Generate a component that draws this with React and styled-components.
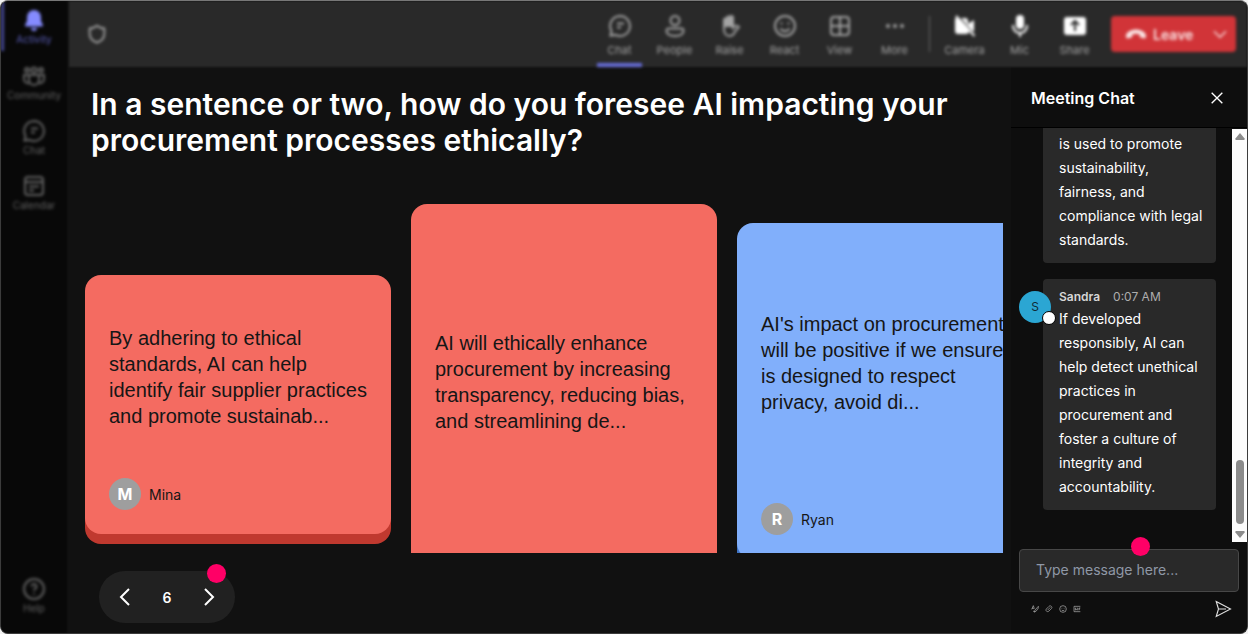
import styled, { createGlobalStyle } from "styled-components";

const GlobalStyle = createGlobalStyle`
  * {
    box-sizing: border-box;
  }

  body {
    margin: 0;
    background: #f2f2f2;
    font-family: Inter, "Liberation Sans", sans-serif;
    color: #fff;
  }

  button {
    border: none;
    padding: 0;
    background: none;
    color: inherit;
    font-family: inherit;
    cursor: pointer;
  }
`;

const Frame = styled.div`
  display: flex;
  height: 100vh;
  border: 1px solid #3c3c3c;
  border-top-color: #777;
  border-radius: 8px;
  overflow: hidden;
  background: #111;
`;

const Sidebar = styled.nav`
  width: 66px;
  flex: none;
  display: flex;
  flex-direction: column;
  gap: 9px;
  padding-bottom: 14px;
  background: #080808;
  filter: blur(1px);
`;

const SideLink = styled.a`
  display: flex;
  flex-direction: column;
  align-items: center;
  justify-content: center;
  height: 46px;
  margin-top: ${(props) => (props.$last ? "auto" : "0")};
  font-size: 10px;
  line-height: 14px;
  text-decoration: none;
  color: #646464;
  filter: blur(1px);
`;

const ActiveLink = styled(SideLink)`
  height: 50px;
  padding: 2px 3px 0 0;
  border-left: 3px solid #484b98;
  color: #5a5eb8;

  svg {
    color: #858bff;
  }
`;

const Body = styled.div`
  flex: 1;
  min-width: 0;
  display: flex;
  flex-direction: column;
`;

const Toolbar = styled.header`
  display: flex;
  align-items: center;
  gap: 10px;
  flex: none;
  height: 66px;
  margin-left: 2px;
  padding: 0 11px 0 17px;
  background: #292929;
  color: #a4a4a4;
  filter: blur(1px);

  & > * {
    filter: blur(1px);
  }
`;

const Shield = styled.span`
  display: flex;
  margin-right: auto;
`;

const Tool = styled.button`
  width: 45px;
  height: 66px;
  display: flex;
  flex-direction: column;
  align-items: center;
  gap: 4px;
  padding-top: 13px;
  border-bottom: 4px solid ${(props) => (props.$active ? "#686dda" : "transparent")};
  font-size: 11px;
  line-height: 16px;

  svg {
    color: ${(props) => (props.$bright ? "#fff" : "inherit")};
  }
`;

const Divider = styled.span`
  width: 1px;
  height: 36px;
  margin: 0 2px;
  background: #6a6a6a;
`;

const Leave = styled.button`
  display: flex;
  align-items: center;
  gap: 6px;
  height: 36px;
  width: 125px;
  margin-left: 4px;
  padding: 0 8px 0 14px;
  border-radius: 4px;
  background: #d13438;
  color: #fbe6e6;
  font-size: 14px;
  font-weight: 600;

  svg:last-child {
    margin-left: auto;
  }
`;

const Content = styled.div`
  flex: 1;
  min-height: 0;
  display: flex;
`;

const Board = styled.main`
  flex: 1;
  min-width: 0;
  display: flex;
  flex-direction: column;
  padding: 19px 8px 10px 18px;
`;

const Question = styled.h1`
  margin: 0 40px 0 6px;
  font-size: 30px;
  line-height: 36px;
  font-weight: 600;
`;

const CardRow = styled.div`
  flex: 1;
  min-height: 0;
  display: flex;
  align-items: flex-start;
  gap: 20px;
  padding-top: 45px;
  overflow: hidden;
`;

const CardBox = styled.article`
  flex: none;
  width: 306px;
  height: ${(props) => props.$height}px;
  margin-top: ${(props) => props.$top}px;
  display: flex;
  flex-direction: column;
  gap: 24px;
  padding: 24px;
  border-radius: 16px;
  background: ${(props) => props.$color};
  box-shadow: 0 10px 0 ${(props) => props.$edge};
  color: #161616;
`;

const Answer = styled.p`
  flex: 1;
  display: flex;
  align-items: center;
  margin: 0;
  font-family: "Liberation Sans", Arial, sans-serif;
  font-size: 20px;
  line-height: 26px;
`;

const Author = styled.div`
  display: flex;
  align-items: center;
  gap: 8px;
  min-height: 32px;
  font-size: 14px;
`;

const Initial = styled.span`
  width: 32px;
  height: 32px;
  border-radius: 50%;
  background: #9e9e9e;
  color: #fff;
  font-size: 16px;
  line-height: 32px;
  font-weight: 700;
  text-align: center;
`;

const Pager = styled.div`
  position: relative;
  align-self: flex-start;
  display: flex;
  align-items: center;
  justify-content: space-between;
  flex: none;
  width: 136px;
  height: 52px;
  margin: 18px 0 0 14px;
  padding: 0 14px;
  border-radius: 26px;
  background: #212121;
  font-size: 14px;
  font-weight: 600;

  button {
    display: flex;
  }
`;

const Dot = styled.span`
  position: absolute;
  top: ${(props) => props.$top}px;
  right: ${(props) => props.$right}px;
  width: 19px;
  height: 19px;
  border-radius: 50%;
  background: #ff0066;
`;

const ChatPanel = styled.aside`
  width: 236px;
  flex: none;
  display: flex;
  flex-direction: column;
  background: #0e0e0e;
`;

const ChatHeader = styled.div`
  display: flex;
  align-items: center;
  justify-content: space-between;
  height: 61px;
  flex: none;
  padding: 2px 22px 0 20px;
  border-bottom: 1px solid #000;

  button {
    display: flex;
  }
`;

const ChatTitle = styled.h2`
  margin: 0;
  font-size: 16px;
  font-weight: 600;
`;

const ChatScroll = styled.div`
  flex: 1;
  min-height: 0;
  display: flex;
`;

const Messages = styled.div`
  flex: 1;
  min-width: 0;
  display: flex;
  flex-direction: column;
  justify-content: flex-end;
  gap: 16px;
  padding: 0 16px 32px 32px;
  overflow: hidden;
`;

const Bubble = styled.div`
  position: relative;
  flex: none;
  padding: 8px 12px 11px 16px;
  border-radius: 4px;
  background: #292929;
  font-size: 14px;
  line-height: 24px;

  p {
    margin: 0;
  }
`;

const Meta = styled.div`
  display: flex;
  gap: 13px;
  font-size: 12px;
  line-height: 20px;
  color: #adadad;

  strong {
    font-weight: 600;
    color: #d6d6d6;
  }
`;

const Avatar = styled.span`
  position: absolute;
  top: 12px;
  left: -24px;
  width: 32px;
  height: 32px;
  border-radius: 50%;
  background: #2ba6d3;
  color: #102a35;
  font-size: 12px;
  line-height: 31px;
  text-align: center;

  &::after {
    content: "";
    position: absolute;
    right: -4px;
    bottom: 0;
    width: 12px;
    height: 12px;
    margin: 0 -1px -2px 0;
    border: 1px solid #000;
    border-radius: 50%;
    background: #fff;
  }
`;

const Scrollbar = styled.div`
  width: 15px;
  margin-top: 1px;
  display: flex;
  flex-direction: column;
  align-items: center;
  padding: 4px 0;
  background: #fcfcfc;
`;

const Thumb = styled.span`
  width: 8px;
  height: 64px;
  margin: auto 0 6px;
  border-radius: 4px;
  background: #8b8b8b;
`;

const Compose = styled.form`
  position: relative;
  flex: none;
  padding: 7px 8px 15px;
`;

const MessageInput = styled.input`
  display: block;
  width: 100%;
  height: 43px;
  padding: 0 16px 2px;
  border: 1px solid #474747;
  border-radius: 4px;
  background: #292929;
  color: #fff;
  font-family: inherit;
  font-size: 14px;

  &::placeholder {
    color: #8f98a6;
    opacity: 1;
  }
`;

const Actions = styled.div`
  display: flex;
  align-items: center;
  gap: 6px;
  margin-top: 8px;
  padding: 0 7px 0 12px;
  color: #b4b4b4;

  button {
    display: flex;
  }

  button:last-child {
    margin-left: auto;
    color: #e0e0e0;
  }
`;

const paths = {
  bell: (
    <path
      d="M12 2a7 7 0 0 0-7 7v4l-2 4c-.3.7.2 1.400 1 1.400h16c.8 0 1.300-.7 1-1.400l-2-4V9a7 7 0 0 0-7-7ZM9 20a3 3 0 0 0 6 0Z"
      fill="currentColor"
      stroke="none"
    />
  ),
  community: (
    <>
      <circle cx="12" cy="6" r="2.500" />
      <circle cx="5" cy="6" r="2" />
      <circle cx="19" cy="6" r="2" />
      <path d="M7 11h10v5a5 5 0 0 1-10 0ZM7 11H2v4a4 4 0 0 0 5 4M17 11h5v4a4 4 0 0 1-5 4" />
    </>
  ),
  chat: (
    <>
      <path d="M12 2a10 10 0 1 1-4.600 18.900L2.500 21.500l1-4.500A10 10 0 0 1 12 2Z" />
      <path d="M9 9.500h7M9 13.500h4" />
    </>
  ),
  calendar: (
    <>
      <rect x="3" y="3" width="18" height="18" rx="3" />
      <path d="M3 8h18M7 12.500h10M7 16.500h5" />
    </>
  ),
  help: (
    <>
      <circle cx="12" cy="12" r="10" />
      <path d="M9.500 9.500a2.500 2.500 0 1 1 3.800 2.100c-.9.6-1.300 1-1.300 2.200M12 16v1.500" />
    </>
  ),
  shield: <path d="M12 3c2.500 2 5 2.800 8 3v6c0 4.500-3 7.500-8 9.500-5-2-8-5-8-9.500V6c3-.2 5.500-1 8-3Z" />,
  people: (
    <>
      <circle cx="12" cy="6.500" r="4.500" />
      <path d="M5.500 14.500h13a2 2 0 0 1 2 2c0 3.500-3.500 5.500-8.500 5.500s-8.500-2-8.500-5.500a2 2 0 0 1 2-2Z" />
    </>
  ),
  raise: (
    <>
      <path d="M6 12V6a1.500 1.500 0 0 1 3 0V4a1.500 1.500 0 0 1 3 0v-.5a1.500 1.500 0 0 1 3 0V12Z" fill="currentColor" />
      <path d="M6 11v4c0 4 2 7 5.500 7 3 0 4.500-1.500 5.500-4.500l4-4.500c-1.500-2-4-1.500-6 1V5" />
    </>
  ),
  react: (
    <>
      <circle cx="12" cy="12" r="10" />
      <path d="M7.500 14.500c2 3.500 7 3.500 9 0M8.500 8.500v2M15.500 8.500v2" />
    </>
  ),
  view: (
    <>
      <rect x="3" y="3" width="18" height="18" rx="3" />
      <path d="M12 3v18M3 12h18" />
    </>
  ),
  more: (
    <g fill="currentColor" stroke="none">
      <circle cx="5" cy="12" r="2" />
      <circle cx="12" cy="12" r="2" />
      <circle cx="19" cy="12" r="2" />
    </g>
  ),
  camera: (
    <>
      <path d="M3 4h9a3 3 0 0 1 3 3v3l6-4v12l-5-3.500V17a3 3 0 0 1-3 3H5a3 3 0 0 1-3-3V5Z" fill="currentColor" stroke="none" />
      <path d="M5 2l17 20" stroke="#292929" />
      <path d="M3 2l18.500 20" />
    </>
  ),
  mic: (
    <>
      <rect x="8" y="1" width="8" height="14" rx="4" fill="currentColor" stroke="none" />
      <path d="M5 11v1a7 7 0 0 0 14 0v-1M12 19v4" />
    </>
  ),
  share: (
    <>
      <rect x="1" y="3" width="22" height="18" rx="3" fill="currentColor" stroke="none" />
      <path d="M12 17V8M8 11l4-4 4 4" stroke="#292929" />
    </>
  ),
  phone: (
    <path
      d="M12 7c5 0 11 2.500 11 7.500 0 2-1 2.500-2.500 2.200l-3-.7c-1-.2-1.500-1-1.500-2v-1.500a12 12 0 0 0-8 0V14c0 1-.5 1.800-1.500 2l-3 .7C2 17 1 16.500 1 14.500 1 9.500 7 7 12 7Z"
      fill="currentColor"
      stroke="none"
    />
  ),
  down: <path d="M3 8l9 9 9-9" />,
  left: <path d="M16 4l-8 8 8 8" />,
  right: <path d="M8 4l8 8-8 8" />,
  close: <path d="M4 4l16 16M20 4L4 20" />,
  format: <path d="M2 13L7 2l3 9M3 10h6M22 4L12 15l-2 6 5-2 8-11ZM6 18l5 3" />,
  attach: <path d="M20 10l-8 8c-5 5-12-1-8-6l8-8c4-4 11 1 8 6ZM8 15l8-8" />,
  gif: (
    <>
      <path d="M22 4H3v16h19" />
      <path d="M10 9H7v6h3v-3M14 8v8M22 9h-4v7M18 12h3" />
    </>
  ),
  send: <path d="M3 2l19 10L3 22l3-10ZM6 12h10" />,
};

function Icon({ name, size = 24, stroke = 2 }) {
  return (
    <svg
      width={size}
      height={size}
      viewBox="0 0 24 24"
      fill="none"
      stroke="currentColor"
      strokeWidth={stroke}
      aria-hidden="true"
    >
      {paths[name]}
    </svg>
  );
}

const sideItems = [
  { icon: "community", label: "Community" },
  { icon: "chat", label: "Chat" },
  { icon: "calendar", label: "Calendar" },
];

const tools = [
  { icon: "chat", label: "Chat", active: true },
  { icon: "people", label: "People" },
  { icon: "raise", label: "Raise" },
  { icon: "react", label: "React" },
  { icon: "view", label: "View" },
  { icon: "more", label: "More" },
];

const devices = [
  { icon: "camera", label: "Camera" },
  { icon: "mic", label: "Mic" },
  { icon: "share", label: "Share" },
];

const cards = [
  {
    id: 1,
    author: "Mina",
    text: "By adhering to ethical standards, AI can help identify fair supplier practices and promote sustainab...",
    color: "#f46b61",
    edge: "#c0392f",
    top: 72,
    height: 259,
  },
  {
    id: 2,
    text: "AI will ethically enhance procurement by increasing transparency, reducing bias, and streamlining de...",
    color: "#f46b61",
    edge: "#c0392f",
    top: 1,
    height: 412,
  },
  {
    id: 3,
    author: "Ryan",
    text: "AI's impact on procurement will be positive if we ensure it is designed to respect privacy, avoid di...",
    color: "#81affb",
    edge: "#3f74c4",
    top: 20,
    height: 336,
  },
];

function Card({ card }) {
  return (
    <CardBox $color={card.color} $edge={card.edge} $top={card.top} $height={card.height}>
      <Answer>{card.text}</Answer>
      <Author>
        {card.author && <Initial>{card.author[0]}</Initial>}
        {card.author}
      </Author>
    </CardBox>
  );
}

function Chat() {
  return (
    <ChatPanel>
      <ChatHeader>
        <ChatTitle>Meeting Chat</ChatTitle>
        <button aria-label="Close chat">
          <Icon name="close" size={16} />
        </button>
      </ChatHeader>
      <ChatScroll>
        <Messages>
          <Bubble>
            <p>is used to promote sustainability, fairness, and compliance with legal standards.</p>
          </Bubble>
          <Bubble>
            <Avatar>S</Avatar>
            <Meta>
              <strong>Sandra</strong>
              <span>0:07 AM</span>
            </Meta>
            <p>
              If developed responsibly, AI can help detect unethical practices in procurement and
              foster a culture of integrity and accountability.
            </p>
          </Bubble>
        </Messages>
        <Scrollbar>
          <svg width="10" height="8" fill="#8b8b8b">
            <path d="M5 0l5 6-1 1H1L0 6Z" />
          </svg>
          <Thumb />
          <svg width="10" height="8" fill="#8b8b8b">
            <path d="M5 8L0 2l1-1h8l1 1Z" />
          </svg>
        </Scrollbar>
      </ChatScroll>
      <Compose onSubmit={(e) => e.preventDefault()}>
        <MessageInput aria-label="Message" placeholder="Type message here..." />
        <Dot $top={-5} $right={97} />
        <Actions>
          <button type="button" aria-label="Format">
            <Icon name="format" size={8} />
          </button>
          <button type="button" aria-label="Attach">
            <Icon name="attach" size={8} />
          </button>
          <button type="button" aria-label="Emoji">
            <Icon name="react" size={8} />
          </button>
          <button type="button" aria-label="GIF">
            <Icon name="gif" size={8} />
          </button>
          <button aria-label="Send">
            <Icon name="send" size={18} stroke={1.5} />
          </button>
        </Actions>
      </Compose>
    </ChatPanel>
  );
}

function App() {
  return (
    <>
      <GlobalStyle />
      <Frame>
        <Sidebar>
          <ActiveLink href="#activity">
            <Icon name="bell" />
            Activity
          </ActiveLink>
          {sideItems.map((item) => (
            <SideLink key={item.label} href={"#" + item.label.toLowerCase()}>
              <Icon name={item.icon} />
              {item.label}
            </SideLink>
          ))}
          <SideLink href="#help" $last>
            <Icon name="help" />
            Help
          </SideLink>
        </Sidebar>
        <Body>
          <Toolbar>
            <Shield>
              <Icon name="shield" size={22} />
            </Shield>
            {tools.map((tool) => (
              <Tool key={tool.label} $active={tool.active}>
                <Icon name={tool.icon} />
                {tool.label}
              </Tool>
            ))}
            <Divider />
            {devices.map((tool) => (
              <Tool key={tool.label} $bright>
                <Icon name={tool.icon} />
                {tool.label}
              </Tool>
            ))}
            <Leave>
              <Icon name="phone" size={22} />
              Leave
              <Icon name="down" size={16} />
            </Leave>
          </Toolbar>
          <Content>
            <Board>
              <Question>
                In a sentence or two, how do you foresee AI impacting your procurement processes
                ethically?
              </Question>
              <CardRow>
                {cards.map((card) => (
                  <Card key={card.id} card={card} />
                ))}
              </CardRow>
              <Pager>
                <button aria-label="Previous">
                  <Icon name="left" />
                </button>
                6
                <button aria-label="Next">
                  <Icon name="right" />
                </button>
                <Dot $top={-7} $right={9} />
              </Pager>
            </Board>
            <Chat />
          </Content>
        </Body>
      </Frame>
    </>
  );
}

export default App;
